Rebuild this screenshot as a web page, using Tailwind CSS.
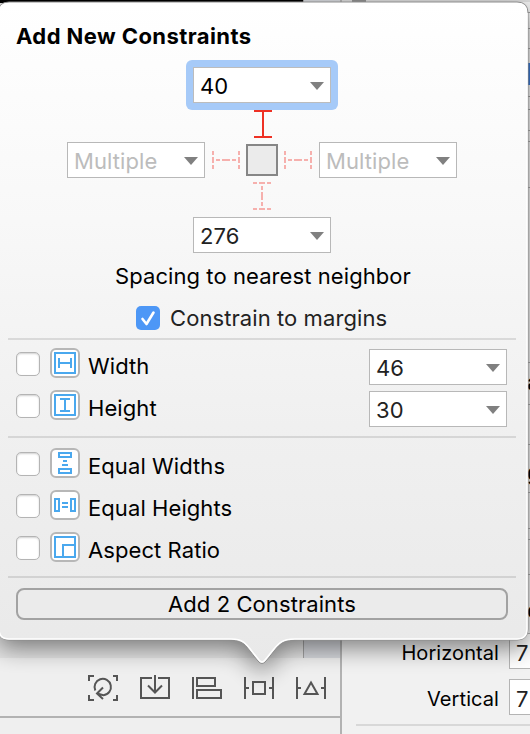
<!DOCTYPE html>
<html lang="en">
<head>
<meta charset="utf-8">
<title>Add New Constraints</title>
<script src="https://cdn.jsdelivr.net/npm/@tailwindcss/browser@4"></script>
</head>
<body class="w-[530px] h-[734px] overflow-hidden bg-[#efefef] font-['Inter','Roboto',sans-serif] text-[22px] leading-[26px] tracking-[0.08px] text-black">
<main class="relative w-[530px] h-[734px] overflow-hidden">

  <!-- Editor window behind the popover -->
  <div class="flex h-full">
    <section class="w-[340px] flex flex-col">
      <div class="h-[658px] flex">
        <div class="w-[303px] bg-[#e4e4e4] border-t-[3px] border-black"></div>
        <div class="grow bg-[#d6d8dd] border-l border-[#a3a3a3]"></div>
      </div>
      <div class="h-[58px] flex items-start pt-[14px] pl-[87px] gap-[20px] bg-[#efefef]">
        <svg class="w-8 h-8 shrink-0" viewBox="0 0 32 32" fill="none" stroke="#555" stroke-width="2">
          <path d="M2 9V4H7M26 4H30V9M2 23V28H7M26 28H30V23"/>
          <path d="M8.300 18.500A8.200 8.200 0 1 1 16.500 23.200L10 21.500M16 15.500 10 21.500 16 27"/>
        </svg>
        <svg class="w-8 h-8 shrink-0" viewBox="0 0 32 32" fill="none" stroke="#555" stroke-width="2">
          <path d="M13 6H2V26H30V6H19M16 3V21M9 13.500 16 20.500 23 13.500"/>
        </svg>
        <svg class="w-8 h-8 shrink-0" viewBox="0 0 32 32" fill="none" stroke="#555" stroke-width="2">
          <path d="M2 5V27M6 6H24V14H6ZM6 18H30V26H6Z"/>
        </svg>
        <svg class="w-8 h-8 shrink-0" viewBox="0 0 32 32" fill="none" stroke="#555" stroke-width="2">
          <path d="M2 5V27M30 5V27M2 16H6M26 16H30M10 10H22V22H10Z"/>
        </svg>
        <svg class="w-8 h-8 shrink-0" viewBox="0 0 32 32" fill="none" stroke="#555" stroke-width="2">
          <path d="M2 5V27M30 5V27M2 16H6M26 16H30M16 10.500 22.500 22H9.500Z"/>
        </svg>
      </div>
      <div class="h-[18px] border-t-2 border-[#b2b2b2] bg-[#efefef]"></div>
    </section>
    <div class="w-[2px] bg-[#b2b2b2]"></div>
    <aside class="w-[188px] flex flex-col bg-[#f1f1f1]">
      <div class="h-[2px] shrink-0 pl-[10px] bg-[#dcdcdc]"><div class="w-[14px] h-[2px] bg-[#8f8f8f]"></div></div>
      <div class="h-[61px] shrink-0 flex flex-col items-end">
        <span class="mt-[10px] w-[3px] h-[17px] border-y border-[#9d9d9d]"></span>
        <span class="mt-[19px] w-[3px] h-px bg-[#a5a5a5]"></span>
      </div>
      <div class="h-[22px] shrink-0 flex justify-end"><span class="w-[3px] bg-[#3b7ad4]"></span></div>
      <div class="h-[548px] shrink-0 flex flex-col items-end overflow-hidden font-bold">
        <span class="mt-[11px] w-[3px] h-[14px] border-y border-[#9d9d9d]"></span>
        <span class="mt-[20px] w-[3px] h-[12px] border-y border-[#a8a8a8]"></span>
        <span class="mt-[45px] w-[3px] h-px bg-[#a8a8a8]"></span>
        <span class="mt-[174px] w-[3px] h-px bg-[#a8a8a8]"></span>
        <span class="mt-[6px] w-[3px] h-[26px] shrink-0 overflow-hidden">a</span>
        <span class="mt-[9px] w-[3px] h-px bg-[#a8a8a8]"></span>
        <span class="mt-[39px] w-[3px] h-px bg-[#a8a8a8]"></span>
        <span class="mt-[14px] w-[3px] h-[26px] shrink-0 overflow-hidden">g</span>
        <span class="mt-[7px] w-[3px] h-[37px] border-y border-[#a8a8a8]"></span>
        <span class="mt-[10px] w-[3px] h-[36px] border-y border-[#a8a8a8]"></span>
        <span class="mt-[22px] w-[3px] h-[26px] shrink-0 overflow-hidden">e</span>
      </div>
      <div class="h-[36px] flex items-start">
        <span class="w-[157px] shrink-0 text-right pt-[7px] text-[20px]">Horizontal</span>
        <span class="ml-[10px] w-[40px] h-[36px] shrink-0 border border-[#b4b4b4] bg-white pl-[6px] pt-[6px] text-[#222]">7</span>
      </div>
      <div class="h-[36px] mt-[10px] flex items-start">
        <span class="w-[157px] shrink-0 text-right pt-[7px] text-[20px]">Vertical</span>
        <span class="ml-[10px] w-[40px] h-[36px] shrink-0 border border-[#b4b4b4] bg-white pl-[6px] pt-[6px] text-[#222]">7</span>
      </div>
      <div class="mt-[9px] ml-[14px] h-[2px] shrink-0 bg-[#d8d8d8]"></div>
    </aside>
  </div>

  <!-- Popover -->
  <div class="absolute inset-0">
    <svg class="absolute inset-0 w-[530px] h-[734px]" viewBox="0 0 530 734">
      <defs>
        <linearGradient id="pop" x1="0" y1="0" x2="0" y2="1"><stop offset="0" stop-color="#fff"/><stop offset=".33" stop-color="#f8f8f8"/><stop offset=".64" stop-color="#f0f0f0"/><stop offset="1" stop-color="#e9e9e9"/></linearGradient>
        <filter id="sh" x="-20%" y="-20%" width="140%" height="140%"><feGaussianBlur stdDeviation="12"/></filter>
      </defs>
      <path d="M9 2H517Q528 2 528 13V629Q528 640 517 640H295C279 640 278 647 266 661Q262 666 258 661C246 647 245 640 231 640H9Q-2 640-2 629V13Q-2 2 9 2Z" transform="translate(0 8)" fill="#000" opacity=".48" filter="url(#sh)"/>
      <path d="M9 2H517Q528 2 528 13V629Q528 640 517 640H295C279 640 278 647 266 661Q262 666 258 661C246 647 245 640 231 640H9Q-2 640-2 629V13Q-2 2 9 2Z" fill="url(#pop)" stroke="#8e8e8e" stroke-width="1"/>
      <path d="M527 13V629Q527 639 517 639H295C278 639 277 646 265 660Q262 664 259 660C247 646 246 639 231 639H9Q-1 639-1 629" fill="none" stroke="#fff" stroke-width="1.500"/>
    </svg>

    <div class="relative flex flex-col h-[640px]">
      <h1 class="h-[60px] pt-[23px] pl-[16px] font-bold tracking-[0.420px] whitespace-nowrap">Add New Constraints</h1>

      <div class="flex flex-col items-center w-[524px]">
        <div class="w-[152px] h-[50px] p-[7px] rounded-[6px] bg-[#a6caf8]">
          <div class="w-[138px] h-[36px] flex items-center justify-between border border-[#bcbcbc] bg-white pl-[6px] pr-[6px]"><span class="pt-[2px]">40</span><svg class="w-[14px] h-[8px] mt-[2px]" viewBox="0 0 14 8"><path d="M0 0H14L7 8Z" fill="#808080"/></svg></div>
        </div>
        <svg class="w-[18px] h-[28px] ml-[2px]" viewBox="0 0 18 28" fill="none" stroke="#ee3124" stroke-width="2"><path d="M0 1H18M0 27H18M9 1V27"/></svg>
        <div class="mt-[4px] h-[36px] flex items-center">
          <div class="w-[138px] h-[36px] flex items-center justify-between border border-[#b8b8b8] bg-white pl-[6px] pr-[6px] text-[#bcbcbc]"><span class="pt-[2px]">Multiple</span><svg class="w-[14px] h-[8px] mt-[2px]" viewBox="0 0 14 8"><path d="M0 0H14L7 8Z" fill="#808080"/></svg></div>
          <svg class="w-[28px] h-[18px] ml-[7px] mr-[6px]" viewBox="0 0 28 18" fill="none" stroke="#f6b0ad" stroke-width="2"><path d="M1 0V18M27 0V18" stroke-dasharray="4 2 6 2 4"/><path d="M4 9H8M10 9H18M20 9H24"/></svg>
          <div class="w-[32px] h-[32px] border-2 border-[#868686] bg-[#ebebeb]"></div>
          <svg class="w-[28px] h-[18px] mx-[6px]" viewBox="0 0 28 18" fill="none" stroke="#f6b0ad" stroke-width="2"><path d="M1 0V18M27 0V18" stroke-dasharray="4 2 6 2 4"/><path d="M4 9H8M10 9H18M20 9H24"/></svg>
          <div class="ml-[1px] w-[138px] h-[36px] flex items-center justify-between border border-[#b8b8b8] bg-white pl-[6px] pr-[6px] text-[#bcbcbc]"><span class="pt-[2px]">Multiple</span><svg class="w-[14px] h-[8px] mt-[2px]" viewBox="0 0 14 8"><path d="M0 0H14L7 8Z" fill="#808080"/></svg></div>
        </div>
        <svg class="w-[18px] h-[28px] mt-[4px]" viewBox="0 0 18 28" fill="none" stroke="#f6b0ad" stroke-width="2"><path d="M0 1H18M0 27H18" stroke-dasharray="4 2 6 2 4"/><path d="M9 4V8M9 10V18M9 20V24"/></svg>
        <div class="mt-[7px] w-[138px] h-[36px] flex items-center justify-between border border-[#b8b8b8] bg-white pl-[6px] pr-[6px] text-[#222]"><span class="pt-[2px]">276</span><svg class="w-[14px] h-[8px] mt-[2px]" viewBox="0 0 14 8"><path d="M0 0H14L7 8Z" fill="#808080"/></svg></div>
        <p class="mt-[10px] h-[26px] pl-[2px] whitespace-nowrap">Spacing to nearest neighbor</p>
      </div>

      <label class="mt-[17px] pl-[136px] h-[24px] flex items-center whitespace-nowrap text-[#222]">
        <span class="w-[24px] h-[24px] rounded-[5px] bg-[#4d97f6] mr-[10px] shrink-0"><svg class="w-[24px] h-[24px]" viewBox="0 0 24 24" fill="none" stroke="#fff" stroke-width="2.600" stroke-linecap="round" stroke-linejoin="round"><path d="M6.500 13 10.500 18 17.500 6.500"/></svg></span>
        <span>Constrain to margins</span>
      </label>

      <div class="mt-[8px] ml-[8px] w-[508px] h-[2px] bg-[#d9d9d9]"></div>

      <div class="mt-[8px] pl-[16px] flex flex-col gap-[12px]">
        <div class="h-[30px] flex items-center">
          <span class="w-[24px] h-[24px] mt-[2px] rounded-[5px] bg-white border border-[#b4b4b4] shadow-[inset_0_1px_2px_#00000030]"></span>
          <svg class="w-[30px] h-[30px] ml-[10px] mr-[8px]" viewBox="0 0 30 30" fill="none" stroke="#4aa8ee" stroke-width="2"><rect x="1" y="1" width="28" height="28" rx="5" fill="#fff" stroke="#b7b7b7"/><path d="M5 5H25V25H5ZM9 10V20M21 10V20M9 15H21"/></svg>
          <span class="w-[281px] pt-[6px]">Width</span>
          <div class="mt-[8px] w-[138px] h-[36px] shrink-0 flex items-center justify-between border border-[#b8b8b8] bg-white pl-[6px] pr-[6px] text-[#222]"><span class="pt-[2px]">46</span><svg class="w-[14px] h-[8px] mt-[2px]" viewBox="0 0 14 8"><path d="M0 0H14L7 8Z" fill="#808080"/></svg></div>
        </div>
        <div class="h-[30px] flex items-center">
          <span class="w-[24px] h-[24px] mt-[2px] rounded-[5px] bg-white border border-[#b4b4b4] shadow-[inset_0_1px_2px_#00000030]"></span>
          <svg class="w-[30px] h-[30px] ml-[10px] mr-[8px]" viewBox="0 0 30 30" fill="none" stroke="#4aa8ee" stroke-width="2"><rect x="1" y="1" width="28" height="28" rx="5" fill="#fff" stroke="#b7b7b7"/><path d="M5 5H25V25H5ZM10 9H20M10 21H20M15 9V21"/></svg>
          <span class="w-[281px] pt-[6px]">Height</span>
          <div class="mt-[8px] w-[138px] h-[36px] shrink-0 flex items-center justify-between border border-[#b8b8b8] bg-white pl-[6px] pr-[6px] text-[#222]"><span class="pt-[2px]">30</span><svg class="w-[14px] h-[8px] mt-[2px]" viewBox="0 0 14 8"><path d="M0 0H14L7 8Z" fill="#808080"/></svg></div>
        </div>
      </div>

      <div class="mt-[16px] ml-[8px] w-[508px] h-[2px] bg-[#d6d6d6]"></div>

      <div class="mt-[10px] pl-[16px] flex flex-col gap-[12px]">
        <div class="h-[30px] flex items-center">
          <span class="w-[24px] h-[24px] mt-[2px] rounded-[5px] bg-white border border-[#b4b4b4] shadow-[inset_0_1px_2px_#00000030]"></span>
          <svg class="w-[30px] h-[30px] ml-[10px] mr-[8px]" viewBox="0 0 30 30" fill="none" stroke="#4aa8ee" stroke-width="2"><rect x="1" y="1" width="28" height="28" rx="5" fill="#fff" stroke="#b7b7b7"/><path d="M9 5H21V9H9ZM9 21H21V25H9ZM13 13H17M12 17H18"/></svg>
          <span class="pt-[6px]">Equal Widths</span>
        </div>
        <div class="h-[30px] flex items-center">
          <span class="w-[24px] h-[24px] mt-[2px] rounded-[5px] bg-white border border-[#b4b4b4] shadow-[inset_0_1px_2px_#00000030]"></span>
          <svg class="w-[30px] h-[30px] ml-[10px] mr-[8px]" viewBox="0 0 30 30" fill="none" stroke="#4aa8ee" stroke-width="2"><rect x="1" y="1" width="28" height="28" rx="5" fill="#fff" stroke="#b7b7b7"/><path d="M5 9H9V21H5ZM21 9H25V21H21ZM12 13H18M12 17H18"/></svg>
          <span class="pt-[6px]">Equal Heights</span>
        </div>
        <div class="h-[30px] flex items-center">
          <span class="w-[24px] h-[24px] mt-[2px] rounded-[5px] bg-white border border-[#b4b4b4] shadow-[inset_0_1px_2px_#00000030]"></span>
          <svg class="w-[30px] h-[30px] ml-[10px] mr-[8px]" viewBox="0 0 30 30" fill="none" stroke="#4aa8ee" stroke-width="2"><rect x="1" y="1" width="28" height="28" rx="5" fill="#fff" stroke="#b7b7b7"/><path d="M5 5H25V25H5ZM13 25V13H25"/></svg>
          <span class="pt-[6px]">Aspect Ratio</span>
        </div>
      </div>

      <div class="mt-[14px] ml-[8px] w-[508px] h-[2px] bg-[#d2d2d2]"></div>
      <button class="mt-[10px] ml-[16px] w-[492px] h-[32px] rounded-[8px] border-2 border-[#a2a2a2] bg-[#ebebeb] flex items-center justify-center">Add 2 Constraints</button>
    </div>
  </div>
</main>
</body>
</html>
